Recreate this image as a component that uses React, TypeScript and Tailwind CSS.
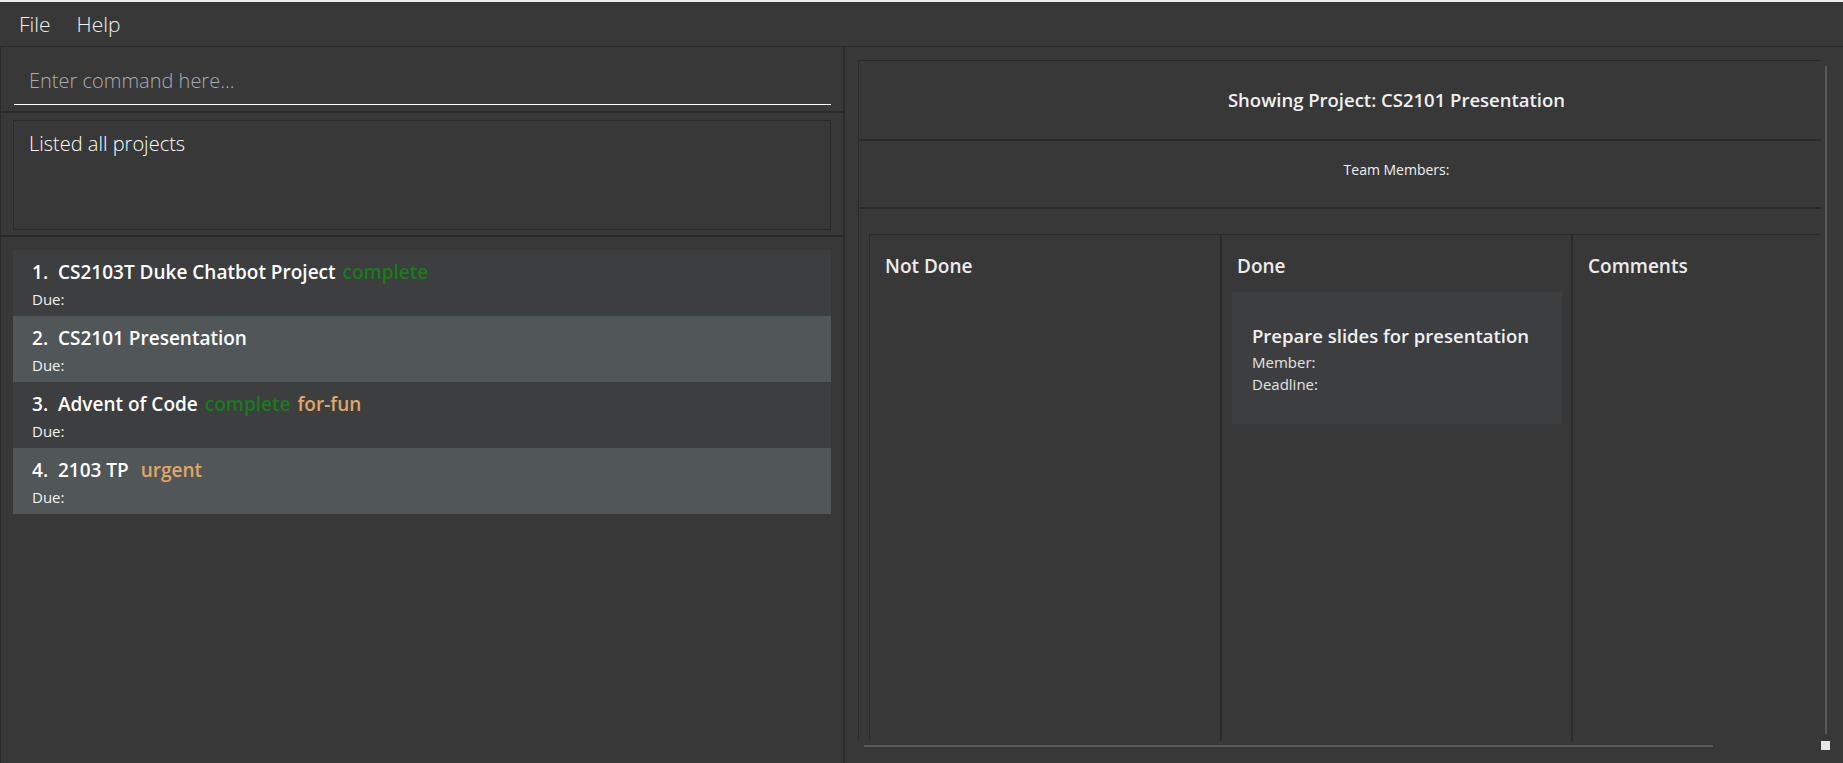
import React from "react";

type Tag = { label: string; color: string };
type Project = { id: number; name: string; tags: Tag[] };

const complete: Tag = { label: "complete", color: "text-[#187c18]" };
const forFun: Tag = { label: "for-fun", color: "text-[#e0a765]" };
const urgent: Tag = { label: "urgent", color: "text-[#e0a765]" };

const projects: Project[] = [
  { id: 1, name: "CS2103T Duke Chatbot Project", tags: [complete] },
  { id: 2, name: "CS2101 Presentation", tags: [] },
  { id: 3, name: "Advent of Code", tags: [complete, forFun] },
  { id: 4, name: "2103 TP ", tags: [urgent] },
];

const ProjectCard = ({ project, index }: { project: Project; index: number }) => {
  const bg = index % 2 === 0 ? "bg-[#3c3e3f]" : "bg-[#515658]";
  return (
    <div className={`h-[66px] pl-[19px] pt-[10px] ${bg}`}>
      <div className="flex h-[24px] items-center whitespace-pre text-[19px] leading-[24px] font-semibold text-white">
        <span>{project.id}.  </span>
        <span>{project.name}</span>
        {project.tags.map((tag) => (
          <span key={tag.label} className={`ml-[7px] ${tag.color}`}>
            {tag.label}
          </span>
        ))}
      </div>
      <div className="mt-[5px] text-[15px] leading-[20px] text-[#f2f2f2]">Due:</div>
    </div>
  );
};

const Column = ({
  title,
  width,
  children,
}: {
  title: string;
  width: string;
  children?: React.ReactNode;
}) => (
  <div className={`${width} shrink-0 border-x border-[#2a2a2a] pt-[19px]`}>
    <div className="pl-[15px] text-[19px] leading-[24px] font-semibold text-[#ececec]">
      {title}
    </div>
    {children}
  </div>
);

export default function App() {
  return (
    <div className="flex h-[763px] w-[1843px] flex-col overflow-hidden bg-[#383838] font-['Open_Sans',sans-serif] text-white">
      <div className="h-[2px] bg-[#ececec]" />

      {/* menu bar */}
      <div className="flex h-[45px] items-center gap-[26px] border-b border-[#2a2a2a] pl-[19px] text-[21px] leading-[28px] font-light text-[#f0f0f0]">
        <span>File</span>
        <span>Help</span>
      </div>

      <div className="flex flex-1">
        {/* left side */}
        <div className="flex w-[845px] flex-col border-l border-r-2 border-[#2a2a2a]">
          <div className="h-[66px] border-b-2 border-[#2a2a2a] pl-[13px] pr-[12px] pt-[9px]">
            <input
              className="block h-[49px] w-full border-b border-white bg-transparent pl-[15px] text-[20px] leading-[26px] font-light text-white outline-none placeholder:text-[#a6adb4]"
              placeholder="Enter command here..."
            />
          </div>

          <div className="h-[124px] border-b-2 border-[#2a2a2a] px-[12px] pt-[7px]">
            <div className="h-[110px] border border-[#2a2a2a] pl-[15px] pt-[10px] text-[20px] leading-[26px] font-light text-white">
              Listed all projects
            </div>
          </div>

          <div className="flex flex-col px-[12px] pt-[13px]">
            {projects.map((p, i) => (
              <ProjectCard key={p.id} project={p} index={i} />
            ))}
          </div>
        </div>

        {/* right side */}
        <div className="flex flex-1 flex-col pl-[13px] pt-[13px]">
          <div className="flex">
            <div className="h-[681px] w-[963px] overflow-hidden">
              <div className="flex h-full w-[1076px] flex-col border-l border-t border-[#2a2a2a]">
                <div className="flex h-[80px] items-center justify-center border-b-2 border-[#2a2a2a] text-[18.5px] leading-[24px] font-semibold text-[#f0f0f0]">
                  Showing Project: CS2101 Presentation
                </div>
                <div className="h-[68px] border-b-2 border-[#2a2a2a] pt-[19px] text-center text-[14px] leading-[20px] text-[#f0f0f0]">
                  Team Members:
                </div>
                <div className="ml-[10px] mt-[25px] flex flex-1 border-t border-[#2a2a2a]">
                  <Column title="Not Done" width="w-[352px]" />
                  <Column title="Done" width="w-[351px]">
                    <div className="ml-[10px] mt-[14px] h-[132px] w-[330px] bg-[#3c3e3f] pl-[20px] pt-[32px]">
                      <div className="text-[18.5px] leading-[24px] font-semibold text-[#f0f0f0]">
                        Prepare slides for presentation
                      </div>
                      <div className="mt-[3px] text-[15px] leading-[22px] text-[#e4e4e4]">Member:</div>
                      <div className="text-[15px] leading-[22px] text-[#e4e4e4]">Deadline:</div>
                    </div>
                  </Column>
                  <Column title="Comments" width="w-[351px]" />
                </div>
              </div>
            </div>
            <div className="w-[10px] pl-[4px] pt-[6px]">
              <div className="h-[668px] w-[2px] bg-[#5a5a5a]" />
            </div>
          </div>
          <div className="flex">
            <div className="h-[10px] w-[963px] pl-[6px] pt-[4px]">
              <div className="h-[2px] w-[849px] bg-[#5a5a5a]" />
            </div>
            <div className="h-[9px] w-[9px] bg-[#e8e8e8]" />
          </div>
        </div>
      </div>
    </div>
  );
}
